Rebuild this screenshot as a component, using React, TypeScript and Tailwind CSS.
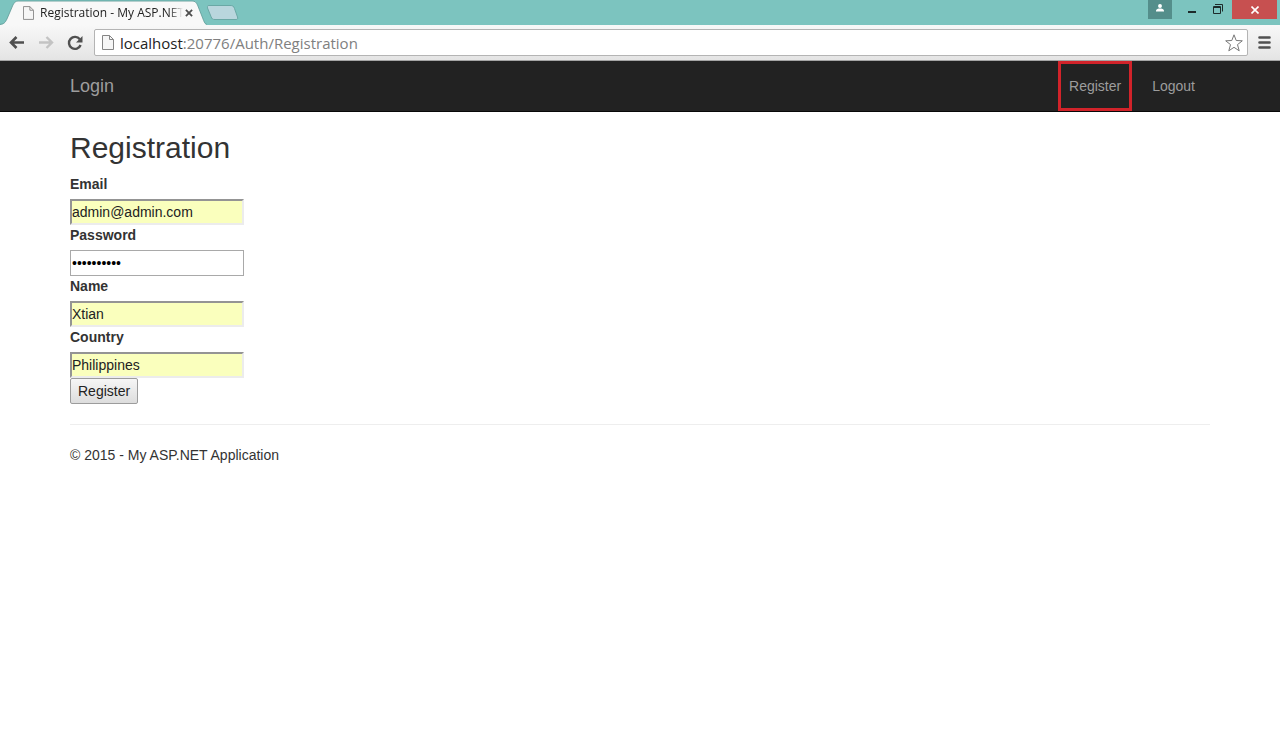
import { useState } from 'react';

function PageIcon({ className }: { className?: string }) {
  return (
    <svg viewBox="0 0 12 15" className={className} fill="#f6f6f6" stroke="#858585" aria-hidden="true">
      <path d="M0.5 0.5H7.5L11.5 4.5V14.5H0.5Z" />
      <path d="M7.5 0.5V4.5H11.5" fill="none" />
    </svg>
  );
}

function TabStrip() {
  return (
    <div className="flex h-[25px] items-start justify-between bg-[#7cc4bf]">
      <div className="flex h-full items-start">
        <div className="relative flex h-full w-[207px] items-center pl-[23px]">
          {/* Tab outline */}
          <svg viewBox="0 0 208 25" className="absolute inset-0 h-full w-full" aria-hidden="true">
            <path
              d="M0 25C4 24 5 23 7 19L13 5C15 1.5 16 1 19 1H193C196 1 197 2 198.5 5L204 19C205.5 23 206 24 208 25Z"
              fill="#f8f8f8"
            />
            <path
              d="M0 24.5C4 24 5 23 7 19L13 5C15 1.5 16 1 19 1H193C196 1 197 2 198.5 5L204 19C205.5 23 206 24 208 24.5"
              fill="none"
              stroke="#5d9995"
              strokeWidth="0.8"
            />
          </svg>
          <PageIcon className="relative h-[14px] w-[11px]" />
          <span className="relative ml-1.5 w-[143px] overflow-hidden whitespace-nowrap mask-r-from-90% font-['Open_Sans',sans-serif] text-xs text-[#222]">
            Registration - My ASP.NET
          </span>
          <button type="button" aria-label="Close tab" className="relative ml-0.5">
            <svg viewBox="0 0 9 9" className="h-2 w-2" stroke="#4d4d4d" strokeWidth="2">
              <path d="M1 1L8 8M8 1L1 8" />
            </svg>
          </button>
        </div>
        <button type="button" aria-label="New tab" className="mt-[5px]">
          <svg viewBox="0 0 32 15" className="h-[15px] w-8" fill="#b9d6dd" stroke="#6aa8a5">
            <path d="M2 0.5H23C26 0.5 26.5 1 27.5 3.5L30.5 12C31 14 30.5 14.5 29 14.5H8C5.5 14.5 5 14 4 11.5L0.5 3C-0.2 1 0.5 0.5 2 0.5Z" />
          </svg>
        </button>
      </div>
      <div className="flex items-start pr-[3px]">
        <button type="button" aria-label="Profile" className="flex h-[19px] w-6 justify-center bg-[#548e8b] pt-1">
          <svg viewBox="0 0 10 9" className="h-2 w-2.5" fill="#fff">
            <circle cx="5" cy="2.2" r="2.2" />
            <path d="M0.5 8.5V7.5C0.5 5.5 3 5 5 5S9.5 5.5 9.5 7.5V8.5Z" />
          </svg>
        </button>
        <button type="button" aria-label="Minimize" className="mt-[11px] ml-4 h-0.5 w-2 bg-[#1d2b2a]" />
        <button type="button" aria-label="Restore" className="mt-1 ml-[17px]">
          <svg viewBox="0 0 10 10" className="h-2.5 w-2.5" fill="none" stroke="#1d2b2a">
            <path d="M2 0.5H9.5V7.5" />
            <path d="M0.5 2.5H7.5V9.5H0.5Z" />
            <path d="M0.5 3.5H7.5" />
          </svg>
        </button>
        <button
          type="button"
          aria-label="Close window"
          className="ml-[9px] flex h-[19px] w-[45px] items-center justify-center bg-[#c75050]"
        >
          <svg viewBox="0 0 8 8" className="h-2 w-2" stroke="#fff" strokeWidth="1.6">
            <path d="M0.5 0.5L7.5 7.5M7.5 0.5L0.5 7.5" />
          </svg>
        </button>
      </div>
    </div>
  );
}

function Toolbar() {
  return (
    <div className="flex h-9 items-center border-b border-[#a5a5a5] bg-linear-to-b from-[#f8f8f8] to-[#e4e4e4] px-[9px]">
      <button type="button" aria-label="Back">
        <svg viewBox="0 0 15 13" className="h-[13px] w-[15px]" fill="none" stroke="#505050" strokeWidth="2.6">
          <path d="M15 6.5H2M7.5 1L2 6.5L7.5 12" />
        </svg>
      </button>
      <button type="button" aria-label="Forward" className="ml-[15px]">
        <svg viewBox="0 0 15 13" className="h-[13px] w-[15px]" fill="none" stroke="#c3c3c3" strokeWidth="2.4">
          <path d="M0 6.5H13M7.5 1L13 6.5L7.5 12" />
        </svg>
      </button>
      <button type="button" aria-label="Reload" className="ml-[13px]">
        <svg viewBox="0 0 16 16" className="h-4 w-4" fill="none" stroke="#505050" strokeWidth="2.4">
          <path d="M12.8 4.3A6 6 0 1 0 13.6 10" />
          <path d="M15.5 1V7.5H9Z" fill="#505050" stroke="none" />
        </svg>
      </button>
      <div className="ml-[11px] flex h-[27px] flex-1 items-center rounded-xs border border-[#b4b4b4] bg-white pr-1 pl-[7px]">
        <PageIcon className="h-[15px] w-3" />
        <p className="ml-1.5 flex-1 font-['Open_Sans',sans-serif] text-[15px] leading-6 text-[#808080]">
          <span className="text-[#222]">localhost</span>:20776/Auth/Registration
        </p>
        <button type="button" aria-label="Bookmark this page">
          <svg viewBox="0 0 18 18" className="h-[18px] w-[18px]" fill="#fff" stroke="#777" strokeLinejoin="round">
            <path d="M9 0.8L11.2 6.5L17.3 6.8L12.5 10.6L14.2 16.8L9 13.3L3.8 16.8L5.5 10.6L0.7 6.8L6.8 6.5Z" />
          </svg>
        </button>
      </div>
      <button type="button" aria-label="Menu" className="ml-2.5">
        <svg viewBox="0 0 13 13" className="h-[13px] w-[13px]" stroke="#505050" strokeWidth="2.6" strokeLinecap="round">
          <path d="M1.5 1.5H11.5M1.5 6.5H11.5M1.5 11.5H11.5" />
        </svg>
      </button>
    </div>
  );
}

function Navbar() {
  return (
    <nav className="border-b border-[#080808] bg-[#222]">
      <div className="mx-auto flex max-w-[1170px] justify-between px-[15px] text-[#9d9d9d]">
        <a href="#login" className="py-[15px] text-lg leading-5">
          Login
        </a>
        <div className="flex gap-px text-sm">
          <a href="#register" className="relative px-[15px] py-[15px]">
            Register
            <span className="absolute inset-x-1 inset-y-0 border-3 border-[#d2232a]" />
          </a>
          <a href="#logout" className="px-[15px] py-[15px]">
            Logout
          </a>
        </div>
      </div>
    </nav>
  );
}

const fields = [
  { id: 'email', label: 'Email', type: 'text', value: 'admin@admin.com' },
  { id: 'password', label: 'Password', type: 'password', value: 'password12' },
  { id: 'name', label: 'Name', type: 'text', value: 'Xtian' },
  { id: 'country', label: 'Country', type: 'text', value: 'Philippines' },
];

function RegistrationForm() {
  const [values, setValues] = useState<Record<string, string>>(
    Object.fromEntries(fields.map((f) => [f.id, f.value]))
  );

  return (
    <form className="flex flex-col items-start" onSubmit={(e) => e.preventDefault()}>
      {fields.map((field) => (
        <div key={field.id} className="flex flex-col">
          <label htmlFor={field.id} className="mb-[5px] font-bold">
            {field.label}
          </label>
          <input
            id={field.id}
            type={field.type}
            value={values[field.id]}
            onChange={(e) => setValues({ ...values, [field.id]: e.target.value })}
            className={
              field.type === 'password'
                ? 'h-[26px] w-[174px] border border-[#a9a9a9] bg-white px-px text-black'
                : 'h-[26px] w-[174px] border-2 border-t-[#949494] border-r-[#ececec] border-b-[#ececec] border-l-[#949494] bg-[#faffbd] text-[#222]'
            }
          />
        </div>
      ))}
      <button
        type="submit"
        className="h-[26px] rounded-xs border border-[#9c9c9c] bg-linear-to-b from-[#f6f6f6] to-[#dddddd] px-[7px] text-[#222]"
      >
        Register
      </button>
    </form>
  );
}

export default function App() {
  return (
    <div className="min-h-screen bg-white font-['Liberation_Sans',Arial,sans-serif] text-sm text-[#333]">
      <header>
        <TabStrip />
        <Toolbar />
      </header>
      <Navbar />
      <main className="mx-auto max-w-[1170px] px-[15px] pt-5">
        <h2 className="mb-2.5 text-3xl leading-8">Registration</h2>
        <RegistrationForm />
        <hr className="my-5 border-[#eee]" />
        <footer>
          <p>© 2015 - My ASP.NET Application</p>
        </footer>
      </main>
    </div>
  );
}
